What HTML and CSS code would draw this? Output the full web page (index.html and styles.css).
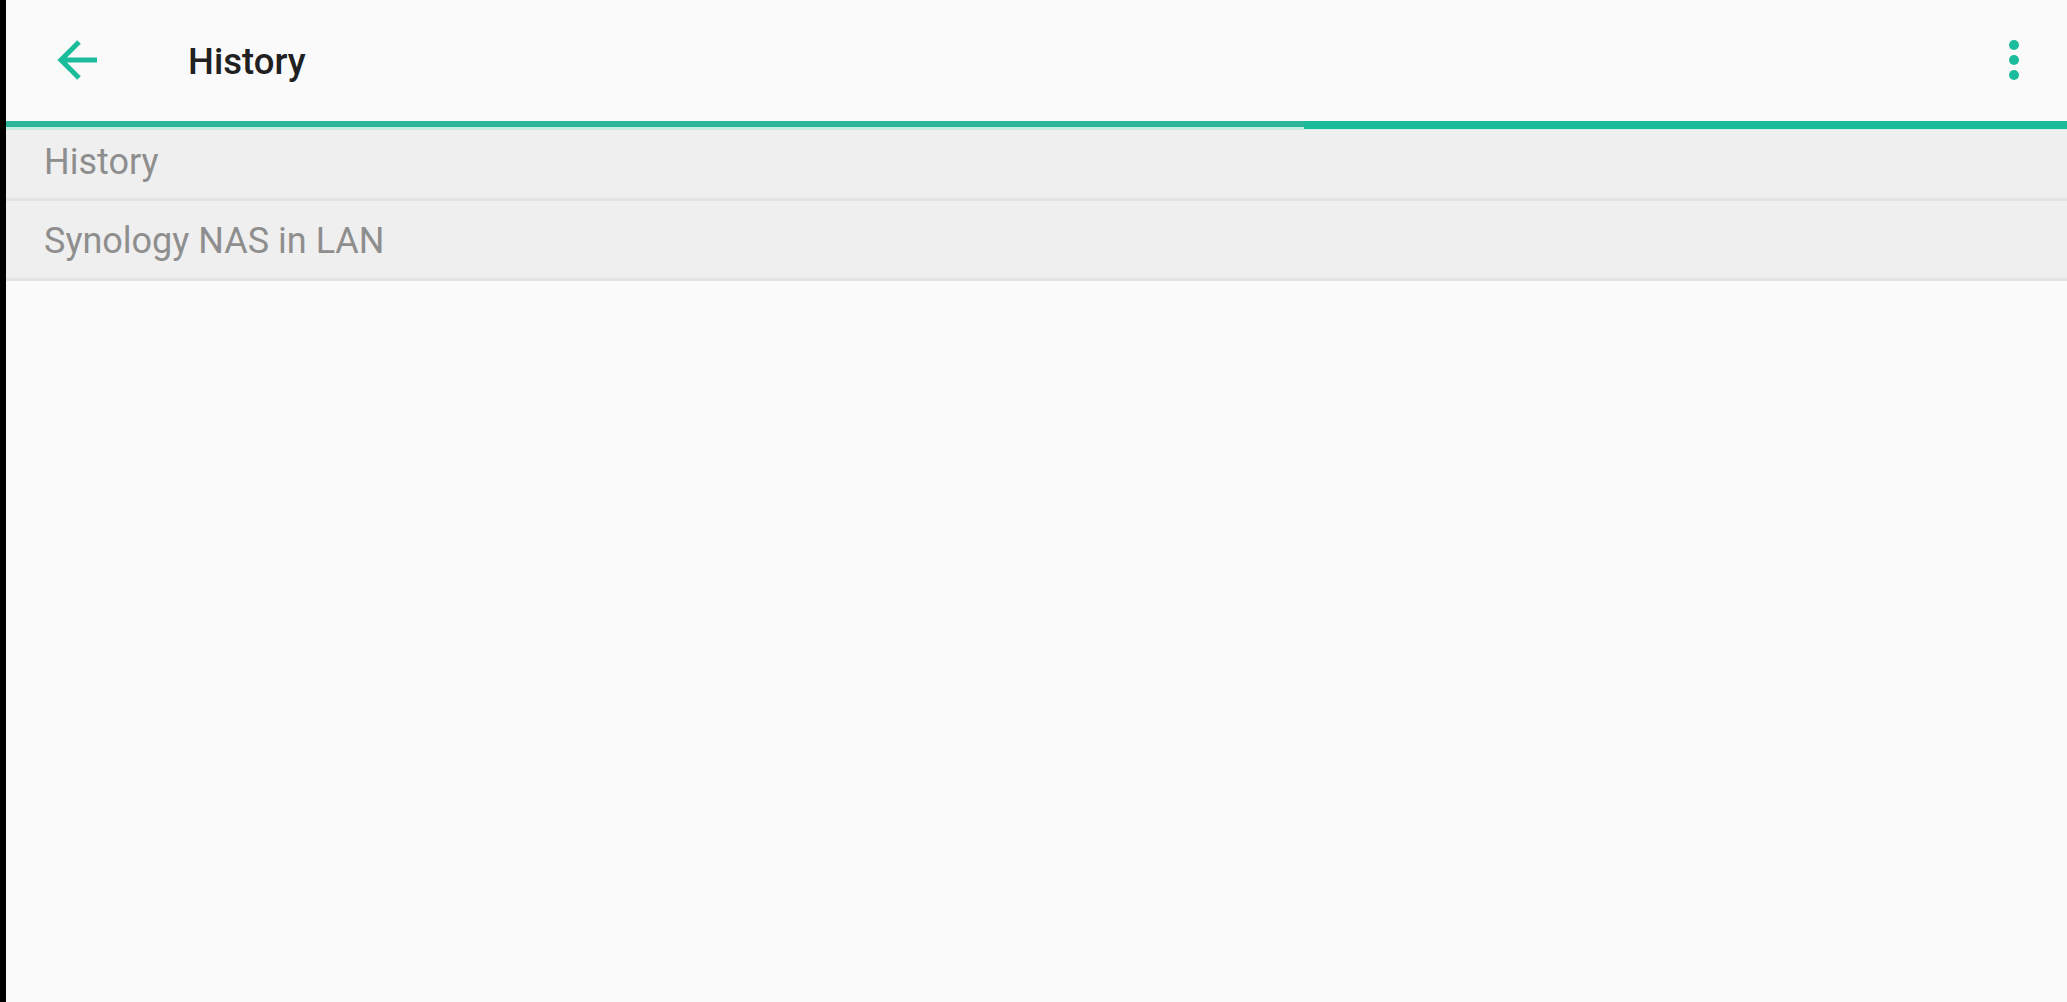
FILE: index.html
```html
<!DOCTYPE html>
<html lang="en">
<head>
    <meta charset="UTF-8">
    <meta name="viewport" content="width=device-width, initial-scale=1.0">
    <title>History</title>
    <link rel="stylesheet" href="styles.css">
</head>
<body>

<div class="edge"></div>

<main class="screen">
    <!-- toolbar -->
    <header class="toolbar">
        <button class="icon-button back-button" aria-label="Back">
            <svg width="44" height="44" viewBox="0 0 44 44">
                <path d="M40 22H5M22 4L4 22L22 40" fill="none" stroke="#1abc9c" stroke-width="5"/>
            </svg>
        </button>
        <h1 class="title">History</h1>
        <button class="icon-button menu-button" aria-label="More">
            <svg width="12" height="44" viewBox="0 0 12 44">
                <circle cx="6" cy="7" r="5" fill="#1abc9c"/>
                <circle cx="6" cy="22" r="5" fill="#1abc9c"/>
                <circle cx="6" cy="37" r="5" fill="#1abc9c"/>
            </svg>
        </button>
    </header>

    <!-- progress -->
    <div class="progress">
        <div class="progress-done"></div>
        <div class="progress-rest"></div>
    </div>

    <!-- list -->
    <ul class="list">
        <li class="list-item first">History</li>
        <li class="list-item second">Synology NAS in LAN</li>
    </ul>
</main>

</body>
</html>
```

FILE: styles.css
```css
html, body {
    height: 100%;
}

body {
    margin: 0;
    padding: 0;
    display: flex;
    background-color: #fafafa;
    font-family: 'Roboto', 'Noto Sans', sans-serif;
}

.edge {
    width: 6px;
    flex-shrink: 0;
    background-color: #000;
}

.screen {
    flex: 1;
    display: flex;
    flex-direction: column;
}

.toolbar {
    height: 120px;
    display: flex;
    align-items: center;
}

.icon-button {
    border: none;
    background: none;
    padding: 0;
    display: flex;
    cursor: pointer;
}

.back-button {
    margin-left: 51px;
}

.title {
    margin: 2px 0 0 87px;
    font-size: 36.5px;
    font-weight: 500;
    color: #212121;
    flex: 1;
}

.menu-button {
    margin-right: 47px;
}

.progress {
    height: 10px;
    display: flex;
}

.progress-done {
    width: 1298px;
    margin-top: 1px;
    height: 6px;
    background-color: #2bb59a;
    border-bottom: 3px solid #c6ebe2;
}

.progress-rest {
    flex: 1;
    margin-top: 1px;
    height: 8px;
    background-color: #1abc9c;
    border-bottom: 1px solid #d4f3ec;
}

.list {
    list-style: none;
    margin: 0;
    padding: 0;
}

.list-item {
    background-color: #efefef;
    border-bottom: 3px solid #e3e3e3;
    display: flex;
    align-items: center;
    padding-left: 38px;
    font-size: 36px;
    color: #8e8e8e;
}

.list-item.first {
    height: 63px;
    padding-bottom: 5px;
}

.list-item.second {
    height: 75px;
    padding-top: 2px;
}
```
